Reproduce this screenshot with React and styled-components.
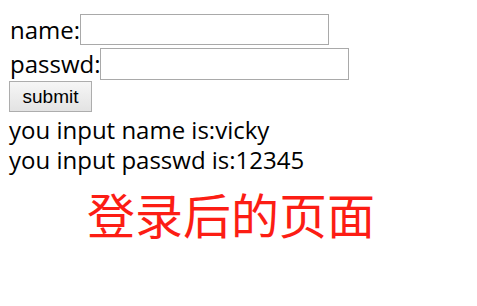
import React from "react";
import styled, { createGlobalStyle } from "styled-components";

const Global = createGlobalStyle`
  html, body { margin: 0; padding: 0; background: #fff; }
  body { font-family: "Open Sans", "Noto Sans CJK SC", sans-serif; color: #000; }
`;

const Page = styled.div`
  display: flex;
  flex-direction: column;
  align-items: flex-start;
  padding: 14px 0 0 9px;
`;

const Row = styled.label`
  display: flex;
  align-items: center;
  font-size: 24px;
  line-height: 30px;
  margin-top: ${(p) => p.$gap || 0}px;
  padding-left: 1px;
`;

const Field = styled.input`
  box-sizing: border-box;
  width: 249px;
  height: ${(p) => p.$h || 31}px;
  border: 1px solid #a9a9a9;
  margin: 0;
  padding: 0 4px;
  font-size: 18px;
  background: #fff;
  outline: none;
`;

const Button = styled.button`
  box-sizing: border-box;
  margin-top: 1px;
  width: 83px;
  height: 31px;
  border: 1px solid #adadad;
  background: linear-gradient(#f6f6f6, #e3e3e3);
  font-family: "Liberation Sans", Arial, sans-serif;
  font-size: 19px;
  color: #000;
  padding: 0;
`;

const Line = styled.div`
  font-size: 24px;
  line-height: 30px;
  white-space: nowrap;
  margin-top: ${(p) => p.$gap || 0}px;
`;

const Title = styled.div`
  margin: 10px 0 0 78px;
  font-family: "Noto Sans CJK SC", sans-serif;
  font-size: 48px;
  line-height: 56px;
  color: #fc1d14;
`;

export default function App() {
  return (
    <>
      <Global />
      <Page>
        <Row>
          name:<Field type="text" />
        </Row>
        <Row $gap={3}>
          passwd:<Field type="password" $h={32} />
        </Row>
        <Button>submit</Button>
        <Line $gap={3}>you input name is:vicky</Line>
        <Line>you input passwd is:12345</Line>
        <Title>登录后的页面</Title>
      </Page>
    </>
  );
}
